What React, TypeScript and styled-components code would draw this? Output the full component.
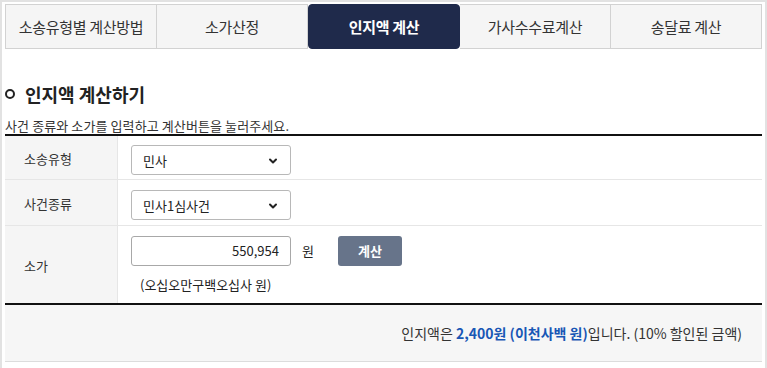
import { createGlobalStyle, styled } from "styled-components";
import { ChevronDown } from "lucide-react";

const GlobalStyle = createGlobalStyle`
    body {
        margin: 0;
        background: #fff;
        font-family: "Noto Sans CJK KR", "Noto Sans", sans-serif;
        color: #333;
    }
`;

const Frame = styled.div`
    height: 368px;
    box-sizing: border-box;
    border: 2px solid #e2e2e2;
    border-bottom: none;
    padding: 2px 3px 0 3px;
`;

const Tabs = styled.ul`
    display: flex;
    margin: 0;
    padding: 0;
    list-style: none;
`;

const Tab = styled.li<{ $active?: boolean }>`
    flex: 1;
    height: 45px;
    box-sizing: border-box;
    display: flex;
    align-items: center;
    justify-content: center;
    font-size: 15px;
    letter-spacing: -0.3px;
    border: 1px solid ${p => (p.$active ? "#1f2a4b" : "#d2d2d2")};
    border-left: ${p => (p.$active ? "1px solid #1f2a4b" : "none")};
    &:first-child { border-left: 1px solid #d2d2d2; }
    background: ${p => (p.$active ? "#1f2a4b" : "#f5f5f5")};
    color: ${p => (p.$active ? "#fff" : "#333")};
    font-weight: ${p => (p.$active ? 700 : 400)};
    border-radius: ${p => (p.$active ? "4px" : "0")};
`;

const Heading = styled.h2`
    display: flex;
    align-items: center;
    gap: 10px;
    margin: 33px 0 0 0;
    font-size: 18px;
    font-weight: 700;
    color: #222;
    line-height: 24px;
`;

const Bullet = styled.span`
    width: 6px;
    height: 6px;
    border: 2px solid #222;
    border-radius: 50%;
`;

const Desc = styled.p`
    margin: 11px 0 0 0;
    font-size: 13px;
    line-height: 17px;
    letter-spacing: 0.1px;
    color: #333;
`;

const Table = styled.div`
    border-top: 2px solid #111;
`;

const Row = styled.div<{ $h: number }>`
    display: flex;
    height: ${p => p.$h}px;
    border-bottom: 1px solid #e6e6e6;
    &:last-child { border-bottom: none; }
`;

const Label = styled.div`
    width: 113px;
    flex-shrink: 0;
    box-sizing: border-box;
    background: #f5f5f5;
    border-right: 1px solid #e6e6e6;
    display: flex;
    align-items: center;
    padding-left: 19px;
    padding-top: 2px;
    font-size: 13px;
    color: #333;
`;

const Cell = styled.div<{ $pt?: number }>`
    flex: 1;
    padding-left: 13px;
    padding-top: ${p => p.$pt ?? 0}px;
    display: flex;
    flex-direction: column;
    justify-content: ${p => (p.$pt ? "flex-start" : "center")};
`;

const SelectBox = styled.div`
    position: relative;
    width: 160px;
    height: 30px;
    box-sizing: border-box;
    border: 1px solid #b8b8b8;
    border-radius: 3px;
    display: flex;
    align-items: center;
    padding-left: 11px;
    font-size: 13px;
    color: #222;
    svg {
        position: absolute;
        right: 11px;
        top: 9px;
    }
`;

const InputLine = styled.div`
    display: flex;
    align-items: center;
`;

const Amount = styled.div`
    width: 160px;
    height: 30px;
    box-sizing: border-box;
    border: 1px solid #a8a8a8;
    border-radius: 3px;
    display: flex;
    align-items: center;
    justify-content: flex-end;
    padding-right: 11px;
    font-size: 13px;
    color: #222;
`;

const Unit = styled.span`
    margin-left: 11px;
    font-size: 13px;
    color: #222;
`;

const CalcButton = styled.button`
    margin-left: 24px;
    width: 64px;
    height: 30px;
    border: none;
    border-radius: 3px;
    background: #67748a;
    color: #fff;
    font-family: inherit;
    font-size: 13px;
    font-weight: 700;
`;

const Korean = styled.div`
    margin: 9px 0 0 9px;
    font-size: 13px;
    color: #222;
`;

const Result = styled.div`
    border-top: 2px solid #111;
    border-bottom: 1px solid #dcdcdc;
    background: #f6f6f6;
    height: 56px;
    display: flex;
    align-items: center;
    justify-content: flex-end;
    padding-right: 20px;
    font-size: 14px;
    color: #333;
    b {
        color: #1957b5;
        font-weight: 700;
    }
`;

const tabs = ["소송유형별 계산방법", "소가산정", "인지액 계산", "가사수수료계산", "송달료 계산"];

function App() {
    return <>
        <GlobalStyle />
        <Frame>
            <Tabs>
                {tabs.map((t, i) => (
                    <Tab key={t} $active={i === 2}>{t}</Tab>
                ))}
            </Tabs>
            <Heading><Bullet />인지액 계산하기</Heading>
            <Desc>사건 종류와 소가를 입력하고 계산버튼을 눌러주세요.</Desc>
            <Table>
                <Row $h={43}>
                    <Label>소송유형</Label>
                    <Cell $pt={9}>
                        <SelectBox>민사<ChevronDown size={12} strokeWidth={4} /></SelectBox>
                    </Cell>
                </Row>
                <Row $h={45}>
                    <Label>사건종류</Label>
                    <Cell $pt={10}>
                        <SelectBox>민사1심사건<ChevronDown size={12} strokeWidth={4} /></SelectBox>
                    </Cell>
                </Row>
                <Row $h={77}>
                    <Label>소가</Label>
                    <Cell>
                        <InputLine>
                            <Amount>550,954</Amount>
                            <Unit>원</Unit>
                            <CalcButton>계산</CalcButton>
                        </InputLine>
                        <Korean>(오십오만구백오십사 원)</Korean>
                    </Cell>
                </Row>
            </Table>
            <Result>
                인지액은&nbsp;<b>2,400원 (이천사백 원)</b>입니다. (10% 할인된 금액)
            </Result>
        </Frame>
    </>;
}
export default App;
